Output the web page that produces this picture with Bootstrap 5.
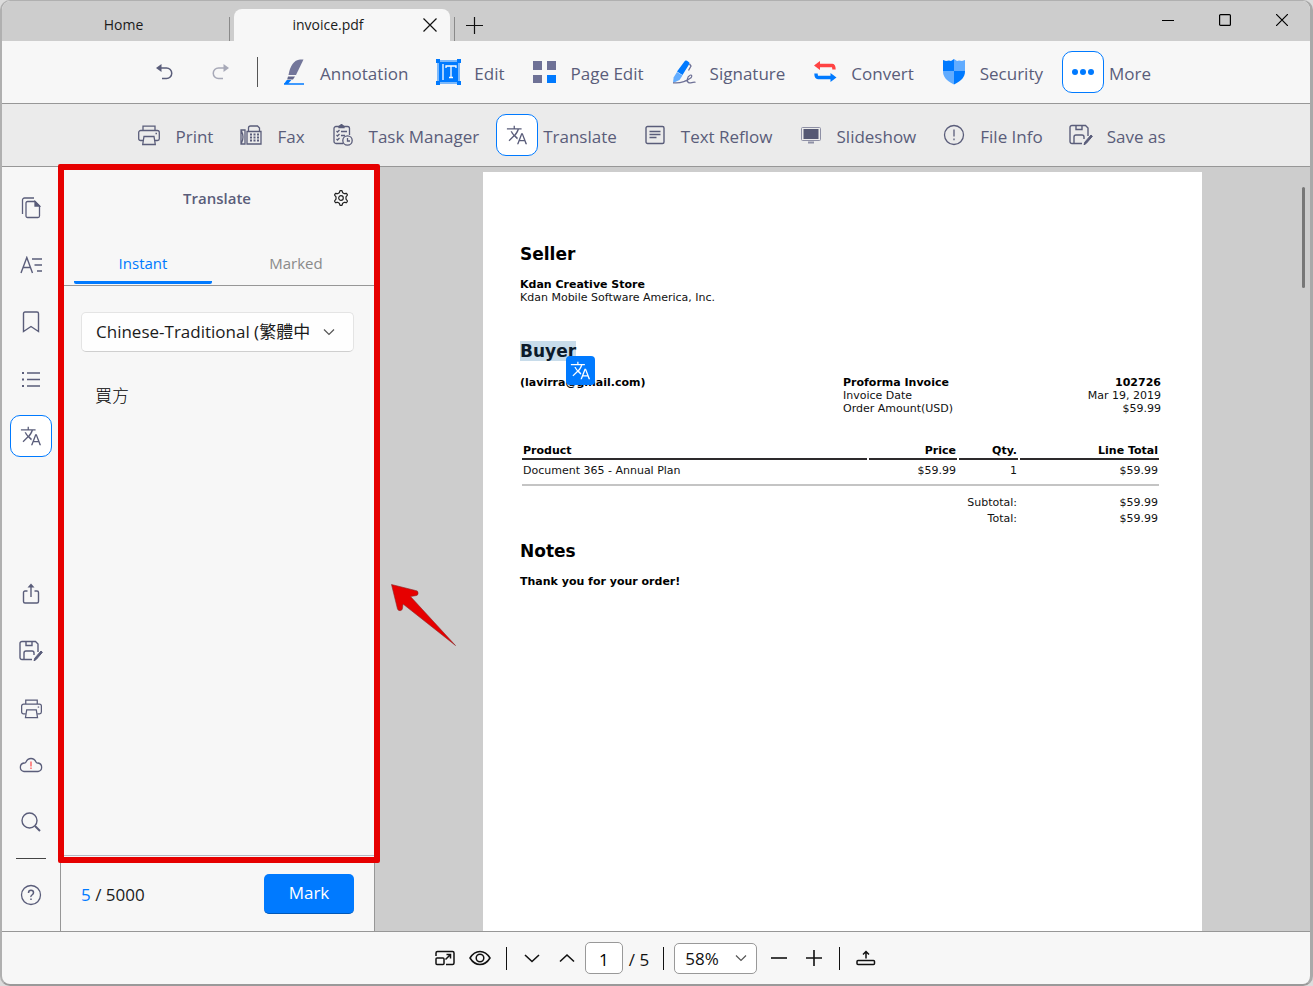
<!DOCTYPE html>
<html lang="en">
<head>
<meta charset="utf-8">
<meta name="viewport" content="width=device-width, initial-scale=1">
<title>invoice.pdf</title>
<link href="https://cdn.jsdelivr.net/npm/bootstrap@5.3.0/dist/css/bootstrap.min.css" rel="stylesheet">
<style>
:root { --ink: #5a5d7a; --accent: #007aff; --line: #979797; --pane: #f7f7f7; --grey: #cdcdcd; }
body { height: 100vh; background: #dcdcdc; font-family: "Open Sans", "Noto Sans CJK TC", sans-serif; font-size: 17px; line-height: 24px; color: #1b1b1b; overflow: hidden; }
button { padding: 0; border: 0; background: none; color: inherit; }
svg { display: block; flex: none; }

/* Window frame and tabs */
.app-window { border: 1px solid #b0b0b0; border-width: 1px 3px 2px 2px; border-right-color: #a9a9a9; border-bottom-color: #9a9a9a; border-radius: 10px; background: var(--pane); overflow: hidden; }
.title-bar { height: 40px; background: var(--grey); }
.doc-tab { font-size: 14px; height: 32px; }
.home-tab { width: 228px; padding: 0 0 8px 16px; border-right: 1px solid #8a8a8a; height: 24px; }
.open-tab { width: 216px; margin-left: 4px; background: var(--pane); border-radius: 8px 8px 0 0; }
.new-tab { border-left: 1px solid #8a8a8a; width: 40px; height: 24px; margin-left: 4px; padding-bottom: 8px; }
.win-btn { width: 57px; height: 38px; }

/* Tool rows */
.tool-row { height: 63px; border-bottom: 1px solid var(--line); color: var(--ink); gap: 19px; padding-right: 18px; }
.tool-row.sub { background: #ebebeb; gap: 17px; }
.tool { gap: 5px; white-space: nowrap; }
.cap { padding-top: 3px; }
.tile { width: 42px; height: 42px; display: flex; align-items: center; justify-content: center; border: 1px solid transparent; border-radius: 10px; flex: none; }
.tile.on { background: #fff; border-color: var(--accent); }
.history { gap: 15px; margin-right: -4px; }
.history .rule-v { width: 1px; height: 30px; background: #555; }

/* Side rail and translate pane */
.work-area { min-height: 0; }
.side-rail { width: 59px; padding: 20px 0 15px; color: var(--ink); border-right: 1px solid var(--line); gap: 15px; }
.side-rail hr { width: 30px; margin: 0; border-top: 1px solid #444; opacity: 1; }
.translate-pane { width: 314px; border-right: 1px solid var(--line); }
.pane-head { height: 88px; padding: 19px 25px 0 20px; }
.pane-head h2 { font-size: 15px; line-height: 24px; font-weight: 600; color: var(--ink); margin: 0; padding-left: 20px; }
.pane-tabs { border-bottom: 1px solid var(--line); padding: 0 9px 0 13px; height: 31px; font-size: 15px; }
.pane-tabs button { width: 138px; color: #8a8a8a; border-bottom: 3px solid transparent; height: 29px; padding-bottom: 10px; line-height: 16px; border-radius: 2px; }
.pane-tabs button.active { color: var(--accent); border-color: var(--accent); }
.pane-body { padding: 26px 20px 0; }
.lang-select, .zoom-select { background-image: url("data:image/svg+xml,%3Csvg xmlns='http://www.w3.org/2000/svg' viewBox='0 0 12 12'%3E%3Cpath d='M1 3.500l5 5 5-5' fill='none' stroke='%23555' stroke-width='1.200'/%3E%3C/svg%3E"); background-size: 12px; }
.lang-select { height: 40px; font-size: 17px; padding: 0 40px 0 14px; border: 1px solid #e4e4e4; border-bottom-color: #cfcfcf; border-radius: 5px; background-color: #fefefe; background-position: right 18px center; color: #1b1b1b; }
.result { padding: 32px 14px 0; font-weight: 300; color: #000; }
.pane-foot { height: 76px; border-top: 1px solid #b4b9c4; padding: 0 20px; }
.used { color: var(--accent); }
.mark-btn { width: 90px; height: 40px; border: 0; border-radius: 5px; background: var(--accent); border-bottom: 1px solid #0058b8; font-size: 17px; }
.callout-frame { position: absolute; top: -3px; left: -3px; right: -6px; bottom: 68px; border: 6px solid #e60000; border-radius: 2px; z-index: 3; pointer-events: none; }
.callout-arrow { position: absolute; left: 16px; top: 417px; }

/* Document */
.viewer { background: var(--grey); padding-top: 5px; overflow: hidden; }
.sheet { width: 719px; background: #fff; padding: 72px 41px 0 37px; font: 11px/13px "DejaVu Sans", sans-serif; color: #111; }
.sheet h1 { font: bold 17px/20px "DejaVu Sans", sans-serif; margin: 0; color: #000; }
.sheet b, .sheet th { color: #000; font-weight: bold; }
.sheet mark { background: #c8dcea; color: #0b1a2a; padding: 0; }
.seller { margin: 14px 0 37px; }
.buyer { margin-bottom: 15px; }
.order-box { width: 318px; }
.meta { margin-bottom: 28px; }
.float-tr { position: absolute; left: 46px; top: 15px; width: 29px; height: 29px; background: var(--accent); color: #fff; border-radius: 4px; display: flex; align-items: center; justify-content: center; }
.items { width: 100%; border-collapse: separate; border-spacing: 2px 0; }
.items th, .items td { padding: 0 1px; }
.items .c-price { width: 88px; }
.items .c-qty { width: 59px; }
.items .c-total { width: 139px; }
.items th { border-bottom: 2px solid #2d2a2c; height: 17px; line-height: 15px; }
.items tbody td { height: 19px; padding-top: 2px; }
.items tfoot td { height: 16px; }
.items .gap-row td { height: 15px; padding: 0; vertical-align: top; }
.items hr { margin: 5px 0 0; border-top: 2px solid #c4c4c4; opacity: 1; }
.sheet .notes { margin: 15px 0 14px; }
.thumb { position: absolute; right: 5px; top: 20px; width: 3px; height: 101px; border-radius: 2px; background: #777; }

/* Status bar */
.status-bar { height: 53px; border-top: 1px solid var(--line); color: #111; padding-right: 1px; }
.status-bar button { width: 35px; height: 35px; display: flex; align-items: center; justify-content: center; }
.status-bar .rule-v { width: 1px; height: 23px; background: #111; margin: 0 8px; }
.status-bar .page-total { margin-left: 6px; }
.status-bar .after-page { margin: 0 10px 0 14px; }
.page-box { width: 38px; height: 32px; border: 1px solid #999; border-radius: 5px; background: #fff; text-align: center; font-size: 17px; padding: 2px 0 0; }
.zoom-select { width: 83px; height: 31px; margin-right: 4px; border: 1px solid #999; border-radius: 5px; background-color: #fff; background-position: right 9px center; font-size: 17px; padding: 2px 24px 0 10px; line-height: 24px; color: #111; }
</style>
</head>
<body>
<svg width="0" height="0" class="position-absolute" aria-hidden="true">
  <symbol id="tr" viewBox="0 0 24 24"><path fill="currentColor" d="M12.900 15.100l-2.600-2.500c1.800-2 3-4.200 3.800-6.700H17V4.500H9.700V2H8.300v2.500H1v1.400h11.500C11.700 8 10.500 10 9 11.600 8 10.500 7.200 9.300 6.500 8H5c.7 1.600 1.700 3.200 3 4.600l-5.200 5.100 1 1L9 13.600l3.300 3.200zM18.300 10h-1.700L12 22h1.600l1.200-3.200h5.300l1.200 3.200H23zm-2.900 7.400l2.100-5.600 2.100 5.600z"/></symbol>
  <symbol id="print" viewBox="0 0 24 24"><g fill="none" stroke="currentColor" stroke-width="1.300"><path d="M6 7.500V3.200h12v4.300M6 17.500H3.500A1.800 1.800 0 0 1 1.700 15.700V9.500a2 2 0 0 1 2-2h16.600a2 2 0 0 1 2 2v6.200a1.800 1.800 0 0 1-1.800 1.800H18"/><path d="M7 13.500h10l1.300 8H5.700z"/><path d="M18.500 10.500h1.500"/></g></symbol>
  <symbol id="save" viewBox="0 0 24 24"><g fill="none" stroke="currentColor" stroke-width="1.400"><path d="M13 20.500H3a2 2 0 0 1-2-2v-14a2 2 0 0 1 2-2h13.500L19 5v8"/><path d="M7 2.500v4h6v-4M5 20.500V14q0-2 2-2h6q2 0 2 2v2"/></g><path d="M15 21.800l.8-2.600 6.200-7.200 1.400 1.300-6.200 7.200z" fill="currentColor" stroke="currentColor"/></symbol>
  <symbol id="down" viewBox="0 0 16 16"><path d="M1 5l7 6.500L15 5" fill="none" stroke="currentColor" stroke-width="1.600"/></symbol>
</svg>

<div class="app-window vh-100 d-flex flex-column">
  <header class="title-bar d-flex align-items-end flex-shrink-0">
    <div class="home-tab doc-tab d-flex align-items-center justify-content-center">Home</div>
    <div class="open-tab doc-tab d-flex align-items-center justify-content-end">
      <span class="flex-grow-1 text-center ps-1">invoice.pdf</span>
      <button type="button" class="me-2 px-1" aria-label="Close tab"><svg width="16" height="16" viewBox="0 0 16 16" stroke="#111" stroke-width="1.200"><path d="M1.500 1.500l13 13M14.500 1.500l-13 13"/></svg></button>
    </div>
    <button type="button" class="new-tab d-flex align-items-center justify-content-center" aria-label="New tab"><svg width="17" height="17" viewBox="0 0 17 17" stroke="#111" stroke-width="1.200"><path d="M8.500 0v17M0 8.500h17"/></svg></button>
    <div class="ms-auto d-flex align-self-start">
      <button type="button" class="win-btn" aria-label="Minimise"><svg class="mx-auto" width="12" height="12" viewBox="0 0 12 12"><path d="M0 6.500h12" stroke="#000"/></svg></button>
      <button type="button" class="win-btn" aria-label="Maximise"><svg class="mx-auto" width="12" height="12" viewBox="0 0 12 12"><rect x=".6" y=".6" width="10.800" height="10.800" rx="1" fill="none" stroke="#000" stroke-width="1.200"/></svg></button>
      <button type="button" class="win-btn" aria-label="Close"><svg class="mx-auto" width="12" height="12" viewBox="0 0 12 12" stroke="#000" stroke-width="1.200"><path d="M0 0l12 12M12 0L0 12"/></svg></button>
    </div>
  </header>

  <nav class="tool-row d-flex align-items-center justify-content-center flex-shrink-0" aria-label="Main tools">
    <div class="history d-flex align-items-center">
      <button type="button" class="tile" aria-label="Undo"><svg width="18" height="18" viewBox="0 0 18 18"><path d="M4 5h7.500a4.700 4.700 0 0 1 0 10.500H7" fill="none" stroke="currentColor" stroke-width="1.500"/><path d="M1 5l5.500-4v8z" fill="currentColor"/></svg></button>
      <button type="button" class="tile opacity-50" aria-label="Redo"><svg width="18" height="18" viewBox="0 0 18 18"><path d="M14 5H6.500a4.700 4.700 0 0 0 0 10.500H11" fill="none" stroke="currentColor" stroke-width="1.500"/><path d="M17 5l-5.500-4v8z" fill="currentColor"/></svg></button>
      <span class="rule-v"></span>
    </div>
    <button type="button" class="tool d-flex align-items-center"><span class="tile"><svg width="24" height="28" viewBox="0 0 24 28"><path d="M6.500 17C8 8 12 2 18 1.500h3.500L14 17z" fill="#73769a"/><path d="M6 18.500h7l-2 3H5.200z" fill="#62658a"/><path d="M4.800 22h4.500L6 26H2z" fill="#007aff"/><path d="M2 26h20" stroke="#007aff" stroke-width="1.400"/></svg></span><span class="cap">Annotation</span></button>
    <button type="button" class="tool d-flex align-items-center"><span class="tile"><svg width="25" height="26" viewBox="0 0 25 26" fill="#007aff"><path d="M3 3h19v20H3z"/><path d="M0 0h4v4H0zM21 0h4v4h-4zM0 22h4v4H0zM21 22h4v4h-4z"/><path d="M2 2v22M23 2v22M2 2h21M2 24h21" stroke="#007aff"/><path d="M7 5v16M10 9V7h10v2M15 7v11M13 18.500h4" fill="none" stroke="#fff" stroke-width="1.300"/></svg></span><span class="cap">Edit</span></button>
    <button type="button" class="tool d-flex align-items-center"><span class="tile"><svg width="23" height="24" viewBox="0 0 23 24"><path fill="#6e7196" d="M0 1h9v9H0zM14 1h9v9h-9zM0 15h9v8H0z"/><path fill="#007aff" d="M14 15h9v8h-9z"/></svg></span><span class="cap">Page Edit</span></button>
    <button type="button" class="tool d-flex align-items-center"><span class="tile"><svg width="24" height="24" viewBox="0 0 24 24"><path d="M13 .8q1-.8 2 0l2 1.500q1 .8.300 1.700L10.500 15 5 11.500z" fill="#007aff"/><path d="M5 12l5.500 3.500L7.500 20 1 23l.6-5.500z" fill="#63adff"/><path d="M17.500 4l1.500 2-2.500 4.500" fill="none" stroke="#6e7196" stroke-width="1.300"/><path d="M1 22.800c7 .8 14-2 18-5 1.500-2 .500-3.500-1-2.500-3 1.500-4 7-.5 7.500 2 .3 3-1 6-.5" fill="none" stroke="#6e7196" stroke-width="1.200"/></svg></span><span class="cap">Signature</span></button>
    <button type="button" class="tool d-flex align-items-center"><span class="tile"><svg width="24" height="24" viewBox="0 0 24 24"><path d="M6 5.500h13q2 0 2 4" stroke="#ff4343" stroke-width="3.400" fill="none"/><path d="M1 5.500L7 1v9z" fill="#ff4343"/><path d="M3 13.500q0 4 2 4h13" stroke="#007aff" stroke-width="3.400" fill="none"/><path d="M23.500 17.500l-6-4.500v9z" fill="#007aff"/></svg></span><span class="cap">Convert</span></button>
    <button type="button" class="tool d-flex align-items-center"><span class="tile"><svg width="22" height="26" viewBox="0 0 22 26"><path d="M0 1l3 1 3-.5 2 .5 3-2v12H0z" fill="#007aff"/><path d="M22 1l-3 1-3-.5-2 .5-3-2v12h11z" fill="#61acff"/><path d="M0 12h11v13.500C3 21.500 0 18 0 12z" fill="#61acff"/><path d="M22 12H11v13.500c8-4 11-7.500 11-13.500z" fill="#007aff"/></svg></span><span class="cap">Security</span></button>
    <button type="button" class="tool d-flex align-items-center"><span class="tile on"><svg width="22" height="8" viewBox="0 0 22 8" fill="#007aff"><circle cx="3" cy="4" r="3"/><circle cx="11" cy="4" r="3"/><circle cx="19" cy="4" r="3"/></svg></span><span class="cap">More</span></button>
  </nav>

  <nav class="tool-row sub d-flex align-items-center justify-content-center flex-shrink-0" aria-label="More tools">
    <button type="button" class="tool d-flex align-items-center"><span class="tile"><svg width="24" height="24"><use href="#print"/></svg></span><span class="cap">Print</span></button>
    <button type="button" class="tool d-flex align-items-center"><span class="tile"><svg width="22" height="22" viewBox="0 0 22 22" fill="none" stroke="currentColor" stroke-width="1.300"><path d="M1 6h4v14H1zM1.500 7q3 6 0 12M7 7.500h14V20H7z M8.500 7.500V4q0-2 2-2h7l2 2v3.500"/><path d="M10 10.500h9M10 13.500h9M10 16.500h9" stroke-width="1.800" stroke-dasharray="2 1.500"/></svg></span><span class="cap">Fax</span></button>
    <button type="button" class="tool d-flex align-items-center"><span class="tile"><svg width="22" height="22" viewBox="0 0 22 22" fill="none" stroke="currentColor" stroke-width="1.300"><path d="M11 19.500H4a2 2 0 0 1-2-2V4.500a2 2 0 0 1 2-2h11.500a2 2 0 0 1 2 2V11"/><path d="M7 2.500l2.500-2 2.500 2v1H7z" fill="currentColor"/><path d="M4.500 7l1 1 2-2M9 7.500h6M4.500 11l1 1 2-2M9 11.500h4M4.500 15l1 1 2-2"/><circle cx="15.500" cy="16.500" r="4.700"/><path d="M15.500 14v3h2.500"/></svg></span><span class="cap">Task Manager</span></button>
    <button type="button" class="tool d-flex align-items-center"><span class="tile on"><svg width="22" height="22"><use href="#tr"/></svg></span><span class="cap">Translate</span></button>
    <button type="button" class="tool d-flex align-items-center"><span class="tile"><svg width="20" height="20" viewBox="0 0 20 20" fill="none" stroke="currentColor" stroke-width="1.400"><rect x="1" y="1.500" width="18" height="17" rx="1.500"/><path d="M4.500 6.500h11M4.500 9.500h11M4.500 12.500h7"/></svg></span><span class="cap">Text Reflow</span></button>
    <button type="button" class="tool d-flex align-items-center"><span class="tile"><svg width="20" height="18" viewBox="0 0 20 18"><rect x=".5" y="1.500" width="19" height="13" rx="1" fill="none" stroke="#8e90a5"/><path d="M2.500 3h15v10h-15z" fill="#555873"/><path d="M7 16.500h6" stroke="#8e90a5" stroke-width="2"/></svg></span><span class="cap">Slideshow</span></button>
    <button type="button" class="tool d-flex align-items-center"><span class="tile"><svg width="22" height="22" viewBox="0 0 22 22" fill="none" stroke="currentColor" stroke-width="1.300"><circle cx="11" cy="11" r="9.500"/><path d="M11 5.500v7M11 14.500v1.700"/></svg></span><span class="cap">File Info</span></button>
    <button type="button" class="tool d-flex align-items-center"><span class="tile"><svg width="24" height="24"><use href="#save"/></svg></span><span class="cap">Save as</span></button>
  </nav>

  <main class="work-area d-flex flex-grow-1">
    <nav class="side-rail d-flex flex-column align-items-center flex-shrink-0" aria-label="Side panels">
      <button type="button" class="tile" aria-label="Pages"><svg width="20" height="22" viewBox="0 0 20 22" fill="none" stroke="currentColor" stroke-width="1.300"><path d="M1.500 17V3a2 2 0 0 1 2-2H13"/><path d="M5 6a1.500 1.500 0 0 1 1.500-1.500H14L18.500 9v10a1.500 1.500 0 0 1-1.500 1.500H6.500A1.500 1.500 0 0 1 5 19z"/><path d="M14 4.500L18.500 9H14z" fill="currentColor"/></svg></button>
      <button type="button" class="tile" aria-label="Text outline"><svg width="23" height="18" viewBox="0 0 23 18" fill="none" stroke="currentColor" stroke-width="1.400"><path d="M1 17L6.800 1.500 12.500 17M3 11.500h7.500M12 3h10M14.500 9H22M17 15h5"/></svg></button>
      <button type="button" class="tile" aria-label="Bookmarks"><svg width="18" height="22" viewBox="0 0 18 22" fill="none" stroke="currentColor" stroke-width="1.400"><path d="M1.500 20.500V2.500q0-1.500 1.500-1.500h12q1.500 0 1.500 1.500v18L9 15.500z"/></svg></button>
      <button type="button" class="tile" aria-label="List"><svg width="20" height="18" viewBox="0 0 20 18" stroke="currentColor" stroke-width="1.300"><path d="M6 3h13M6 9.500h13M6 16h13"/><path d="M1 3h2M1 9.500h2M1 16h2" stroke-width="2"/></svg></button>
      <button type="button" class="tile on" aria-label="Translate"><svg width="22" height="22"><use href="#tr"/></svg></button>
      <button type="button" class="tile mt-auto" aria-label="Share"><svg width="18" height="22" viewBox="0 0 18 22" fill="none" stroke="currentColor" stroke-width="1.400"><path d="M5.500 8H3a1.500 1.500 0 0 0-1.500 1.500v9A1.500 1.500 0 0 0 3 20h12a1.500 1.500 0 0 0 1.500-1.500v-9A1.500 1.500 0 0 0 15 8h-2.500M9 14V3"/><path d="M5.500 4.500L9 .5l3.500 4z" fill="currentColor" stroke="none"/></svg></button>
      <button type="button" class="tile" aria-label="Save as"><svg width="24" height="24"><use href="#save"/></svg></button>
      <button type="button" class="tile" aria-label="Print"><svg width="23" height="23"><use href="#print"/></svg></button>
      <button type="button" class="tile" aria-label="Cloud alert"><svg width="24" height="16" viewBox="0 0 24 16" fill="none" stroke="currentColor" stroke-width="1.300"><path d="M5 14.500a4.300 4.300 0 0 1 0-8.500q1.500.3 2-1 1.500-3.500 5-3.500t5 3.500q.5 1.300 2 1a4.300 4.300 0 0 1 0 8.500z"/><path d="M12 4.500v5M12 10.500v1.500" stroke="#ff4343" stroke-width="1.200"/></svg></button>
      <button type="button" class="tile" aria-label="Search"><svg width="20" height="20" viewBox="0 0 20 20" fill="none" stroke="currentColor" stroke-width="1.400"><circle cx="8.500" cy="8.500" r="7.500"/><path d="M14 14l5 5" stroke-width="1.900"/></svg></button>
      <hr>
      <button type="button" class="tile" aria-label="Help"><svg width="22" height="22" viewBox="0 0 22 22" fill="none" stroke="currentColor" stroke-width="1.300"><circle cx="11" cy="11" r="9.500"/><path d="M8.500 9q0-2.700 2.500-2.700T13.500 8.800Q13.500 10 12 11t-1 2M11 14.500V16" stroke-width="1.500"/></svg></button>
    </nav>

    <section class="translate-pane d-flex flex-column flex-shrink-0 position-relative">
      <div class="pane-head d-flex">
        <h2 class="flex-grow-1 text-center">Translate</h2>
        <button type="button" class="align-self-start mt-1" aria-label="Settings"><svg width="16" height="16" viewBox="0 0 16 16" fill="none" stroke="#222" stroke-width="1.200"><path d="M6.300 2.700L7 .7h2l.7 2 1.700 1 2.100-.4 1 1.700L13 6.900v2.200l1.500 1.900-1 1.700-2.100-.4-1.700 1-.7 2H7l-.7-2-1.700-1-2.100.4-1-1.700L3 9.100V6.900L1.500 5l1-1.700 2.100.4z" stroke-linejoin="round"/><circle cx="8" cy="8" r="2.300"/></svg></button>
      </div>
      <div class="pane-tabs d-flex justify-content-between" role="tablist">
        <button type="button" class="active" role="tab" aria-selected="true">Instant</button>
        <button type="button" role="tab" aria-selected="false">Marked</button>
      </div>
      <div class="pane-body flex-grow-1">
        <select class="form-select lang-select" aria-label="Target language"><option>Chinese-Traditional (繁體中</option></select>
        <div class="result" lang="zh-Hant">買方</div>
      </div>
      <div class="pane-foot d-flex align-items-center justify-content-between">
        <span class="cap"><span class="used">5</span> / 5000</span>
        <button type="button" class="btn btn-primary mark-btn p-0">Mark</button>
      </div>
      <div class="callout-frame"></div>
    </section>

    <section class="viewer flex-grow-1 position-relative d-flex justify-content-center">
      <article class="sheet">
        <h1>Seller</h1>
        <div class="seller"><b>Kdan Creative Store</b><br>Kdan Mobile Software America, Inc.</div>
        <div class="position-relative d-inline-block buyer"><h1><mark>Buyer</mark></h1>
          <button type="button" class="float-tr" aria-label="Translate selection"><svg width="21" height="21"><use href="#tr"/></svg></button>
        </div>
        <div class="d-flex justify-content-between meta">
          <b>(lavirra@gmail.com)</b>
          <div class="d-flex justify-content-between order-box">
            <div><b>Proforma Invoice</b><br>Invoice Date<br>Order Amount(USD)</div>
            <div class="text-end"><b>102726</b><br>Mar 19, 2019<br>$59.99</div>
          </div>
        </div>
        <table class="items">
          <colgroup><col><col class="c-price"><col class="c-qty"><col class="c-total"></colgroup>
          <thead><tr><th>Product</th><th class="text-end">Price</th><th class="text-end">Qty.</th><th class="text-end">Line Total</th></tr></thead>
          <tbody><tr><td>Document 365 - Annual Plan</td><td class="text-end">$59.99</td><td class="text-end">1</td><td class="text-end">$59.99</td></tr></tbody>
          <tfoot>
            <tr class="gap-row"><td colspan="4"><hr></td></tr>
            <tr><td colspan="3" class="text-end">Subtotal:</td><td class="text-end">$59.99</td></tr>
            <tr><td colspan="3" class="text-end">Total:</td><td class="text-end">$59.99</td></tr>
          </tfoot>
        </table>
        <h1 class="notes">Notes</h1>
        <b>Thank you for your order!</b>
      </article>
      <div class="thumb"></div>
      <svg class="callout-arrow" width="66" height="64" viewBox="0 0 66 64"><path d="M.5.500L24.500 6.500a2.600 2.600 0 0 1 0 5.200L19.500 12.500 64.500 61.500 12 20l-.5 4.500a2.600 2.600 0 0 1-5 .5z" fill="#e60000" stroke="#8c2a2a" stroke-width=".6"/></svg>
    </section>
  </main>

  <footer class="status-bar d-flex align-items-center justify-content-center flex-shrink-0">
    <button type="button" aria-label="Fit page"><svg width="20" height="16" viewBox="0 0 20 16" fill="none" stroke="currentColor" stroke-width="1.500"><path d="M1 6V3q0-1.500 1.500-1.500h15Q19 1.500 19 3v10q0 1.500-1.500 1.500H11"/><rect x="1" y="8" width="8" height="6.500" rx="1"/><path d="M10.500 9.500l5-5M11.500 4.500h4v4"/></svg></button>
    <button type="button" aria-label="View mode"><svg width="22" height="16" viewBox="0 0 22 16" fill="none" stroke="currentColor" stroke-width="1.500"><path d="M1 8q4-6.500 10-6.500T21 8q-4 6.500-10 6.500T1 8z"/><circle cx="11" cy="8" r="3.800"/></svg></button>
    <span class="rule-v"></span>
    <button type="button" aria-label="Next page"><svg width="16" height="16"><use href="#down"/></svg></button>
    <button type="button" aria-label="Previous page"><svg width="16" height="16" viewBox="0 0 16 16"><path d="M1 11.500L8 5l7 6.500" fill="none" stroke="currentColor" stroke-width="1.600"/></svg></button>
    <input class="page-box" type="text" value="1" aria-label="Page">
    <span class="cap page-total">/ 5</span>
    <span class="rule-v after-page"></span>
    <select class="form-select zoom-select" aria-label="Zoom"><option>58%</option></select>
    <button type="button" aria-label="Zoom out"><svg width="16" height="16" viewBox="0 0 16 16"><path d="M0 8h16" stroke="currentColor" stroke-width="1.600"/></svg></button>
    <button type="button" aria-label="Zoom in"><svg width="16" height="16" viewBox="0 0 16 16"><path d="M0 8h16M8 0v16" stroke="currentColor" stroke-width="1.600"/></svg></button>
    <span class="rule-v"></span>
    <button type="button" aria-label="Export"><svg width="20" height="16" viewBox="0 0 20 16" fill="none" stroke="currentColor" stroke-width="1.500"><rect x="1" y="10.500" width="17.500" height="4" rx="1"/><path d="M10 8.500V2M7 4.500l3-3 3 3"/></svg></button>
  </footer>
</div>
<script src="https://cdn.jsdelivr.net/npm/bootstrap@5.3.0/dist/js/bootstrap.bundle.min.js"></script>
</body>
</html>
